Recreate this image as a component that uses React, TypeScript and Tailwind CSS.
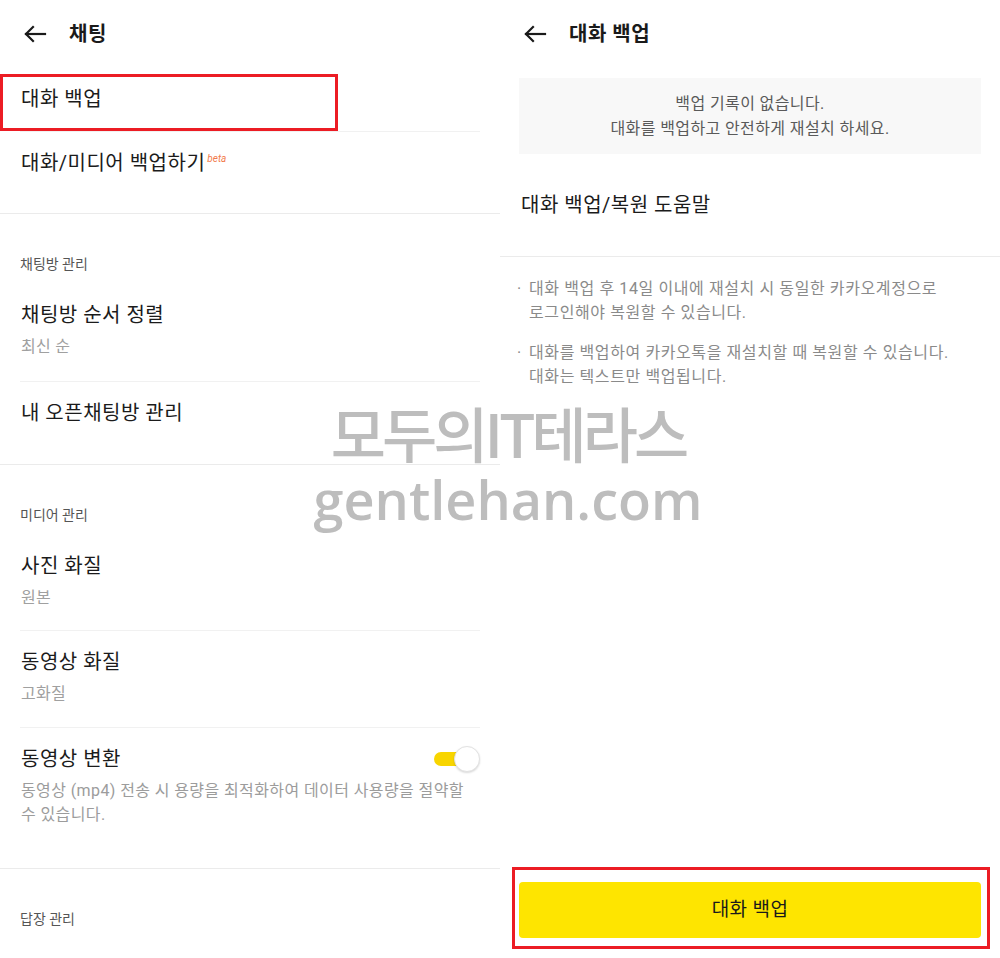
import React from "react";

const font = { fontFamily: 'Roboto, "Noto Sans CJK KR", sans-serif' };

function BackArrow() {
    return (
        <svg width="24" height="18" viewBox="0 0 24 18" fill="none" stroke="#1a1a1a" strokeWidth="2.2" strokeLinecap="square">
            <path d="M22 9H3" />
            <path d="M10 2L3 9l7 7" />
        </svg>
    );
}

function Header({ title }: { title: string }) {
    return (
        <div className="h-[68px] flex items-center pl-[23px]">
            <BackArrow />
            <span className="ml-[22px] text-[20px] font-bold text-[#1a1a1a] leading-7 tracking-[0.5px]">{title}</span>
        </div>
    );
}

function Item({ title, sub, h }: { title: React.ReactNode; sub?: string; h: string }) {
    return (
        <div className={`${h} pt-[17px] pl-[21px] pr-[20px]`}>
            <div className="text-[20px] leading-7 text-[#1b1b1b] tracking-[0.5px]">{title}</div>
            {sub && <div className="mt-[6px] text-[16px] leading-6 text-[#a0a0a0] tracking-[0.3px]">{sub}</div>}
        </div>
    );
}

function Section({ label }: { label: string }) {
    return (
        <div className="h-[70px] pt-[40px] pl-[20px] text-[14px] leading-5 text-[#555555]">{label}</div>
    );
}

const Inset = () => <div className="mx-[20px] h-px bg-[#f1f1f1]" />;
const Full = () => <div className="h-px bg-[#ebebeb]" />;

function LeftPanel() {
    return (
        <div className="w-[500px] flex flex-col">
            <Header title="채팅" />
            <div className="relative">
                <Item title="대화 백업" h="h-[63px]" />
                <div className="absolute left-0 top-[6px] w-[338px] h-[57px] border-[3px] border-[#ec1c24]" />
            </div>
            <Inset />
            <Item
                h="h-[81px]"
                title={
                    <span>
                        대화/미디어 백업하기
                        <span className="relative -top-[8px] ml-[2px] text-[10px] italic tracking-normal text-[#f27b4b]">beta</span>
                    </span>
                }
            />
            <Full />
            <Section label="채팅방 관리" />
            <Item title="채팅방 순서 정렬" sub="최신 순" h="h-[97px]" />
            <Inset />
            <Item title="내 오픈채팅방 관리" h="h-[82px]" />
            <Full />
            <Section label="미디어 관리" />
            <Item title="사진 화질" sub="원본" h="h-[95px]" />
            <Inset />
            <Item title="동영상 화질" sub="고화질" h="h-[96px]" />
            <Inset />
            <div className="h-[140px] pt-[17px] pl-[21px] pr-[20px]">
                <div className="flex items-center justify-between">
                    <div className="text-[20px] leading-7 text-[#1b1b1b] tracking-[0.5px]">동영상 변환</div>
                    <div className="relative w-[46px] h-[26px] flex items-center">
                        <div className="w-[36px] h-[14px] rounded-full bg-[#f8d500]" />
                        <div className="absolute right-0 top-0 w-[26px] h-[26px] rounded-full bg-white border border-[#e2e2e2] shadow-[0_1px_2px_rgba(0,0,0,0.15)]" />
                    </div>
                </div>
                <div className="mt-[6px] pr-[4px] text-[16px] leading-6 text-[#9c9c9c] tracking-[0.4px]">
                    동영상 (mp4) 전송 시 용량을 최적화하여 데이터 사용량을 절약할 수 있습니다.
                </div>
            </div>
            <Full />
            <Section label="답장 관리" />
        </div>
    );
}

function RightPanel() {
    return (
        <div className="w-[500px] flex flex-col">
            <Header title="대화 백업" />
            <div className="mx-[19px] mt-[10px] h-[76px] bg-[#f8f8f8] flex flex-col items-center justify-center text-[16px] leading-[25px] text-[#5a5a5a] tracking-[0.4px]">
                <div>백업 기록이 없습니다.</div>
                <div>대화를 백업하고 안전하게 재설치 하세요.</div>
            </div>
            <div className="h-[102px] flex items-center pl-[21px] text-[20px] text-[#1b1b1b] tracking-[0.5px]">대화 백업/복원 도움말</div>
            <Full />
            <div className="pt-[20px] pl-[17px] pr-[10px] text-[16px] leading-6 text-[#8a8a8a] tracking-[0.6px] flex flex-col gap-[16px]">
                <div className="flex">
                    <span className="w-[12px] shrink-0">·</span>
                    <div className="whitespace-nowrap">
                        대화 백업 후 14일 이내에 재설치 시 동일한 카카오계정으로
                        <br />
                        로그인해야 복원할 수 있습니다.
                    </div>
                </div>
                <div className="flex">
                    <span className="w-[12px] shrink-0">·</span>
                    <div className="whitespace-nowrap">
                        대화를 백업하여 카카오톡을 재설치할 때 복원할 수 있습니다.
                        <br />
                        대화는 텍스트만 백업됩니다.
                    </div>
                </div>
            </div>
            <div className="flex-1" />
            <div className="relative px-[19px] pb-[20px]">
                <button className="w-full h-[56px] rounded-[4px] bg-[#fee500] text-[19px] text-[#1a1a1a] tracking-[0.4px]">대화 백업</button>
                <div className="absolute left-[12px] right-[10px] -top-[15px] bottom-[9px] border-[3px] border-[#ec1c24]" />
            </div>
        </div>
    );
}

export default function App() {
    return (
        <div className="relative w-[1000px] h-[958px] bg-white flex overflow-hidden" style={font}>
            <LeftPanel />
            <RightPanel />
            <div className="absolute left-0 right-0 top-[400px] flex flex-col items-center pointer-events-none text-[#bdbdbd] pl-[16px]">
                <div className="text-[60px] leading-[64px] font-medium tracking-[-4px]" style={{ fontFamily: '"Noto Sans CJK KR", sans-serif' }}>
                    모두의IT테라스
                </div>
                <div className="text-[54px] leading-[64px] font-semibold mt-[3px]" style={{ fontFamily: '"Open Sans", sans-serif' }}>
                    gentlehan.com
                </div>
            </div>
        </div>
    );
}
